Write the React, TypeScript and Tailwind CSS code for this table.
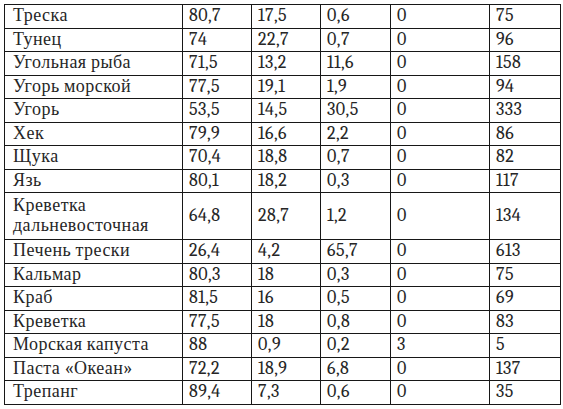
import React from "react";

const rows: [string, string, string, string, string, string][] = [
  ["Треска", "80,7", "17,5", "0,6", "0", "75"],
  ["Тунец", "74", "22,7", "0,7", "0", "96"],
  ["Угольная рыба", "71,5", "13,2", "11,6", "0", "158"],
  ["Угорь морской", "77,5", "19,1", "1,9", "0", "94"],
  ["Угорь", "53,5", "14,5", "30,5", "0", "333"],
  ["Хек", "79,9", "16,6", "2,2", "0", "86"],
  ["Щука", "70,4", "18,8", "0,7", "0", "82"],
  ["Язь", "80,1", "18,2", "0,3", "0", "117"],
  ["Креветка дальневосточная", "64,8", "28,7", "1,2", "0", "134"],
  ["Печень трески", "26,4", "4,2", "65,7", "0", "613"],
  ["Кальмар", "80,3", "18", "0,3", "0", "75"],
  ["Краб", "81,5", "16", "0,5", "0", "69"],
  ["Креветка", "77,5", "18", "0,8", "0", "83"],
  ["Морская капуста", "88", "0,9", "0,2", "3", "5"],
  ["Паста «Океан»", "72,2", "18,9", "6,8", "0", "137"],
  ["Трепанг", "89,4", "7,3", "0,6", "0", "35"],
];

export default function App() {
  return (
    <div className="w-[563px] h-[409px] bg-white pt-[4px] pl-[4px] font-serif text-lg leading-5 tracking-wide text-neutral-800">
      <table className="border-collapse font-serif text-lg leading-5 tracking-wide">
        <colgroup>
          <col className="w-[178px]" />
          <col className="w-[69px]" />
          <col className="w-[69px]" />
          <col className="w-[70px]" />
          <col className="w-[99px]" />
          <col className="w-[71px]" />
        </colgroup>
        <tbody>
          {rows.map((r, i) => {
            const dbl = r[0] === "Креветка дальневосточная";
            return (
              <tr key={i} className={dbl ? "h-[47px]" : "h-[23.5px]"}>
                {r.map((c, j) => (
                  <td
                    key={j}
                    className={
                      j === 0
                        ? "border-[1.5px] border-neutral-900 align-middle p-0 pl-2 font-serif text-lg leading-5 tracking-wide text-neutral-800"
                        : "border-[1.5px] border-neutral-900 align-middle p-0 pl-1.5 font-serif text-lg leading-5 tracking-wide text-neutral-800"
                    }
                  >
                    {dbl && j === 0 ? (
                      <>
                        Креветка
                        <br />
                        дальневосточная
                      </>
                    ) : (
                      c
                    )}
                  </td>
                ))}
              </tr>
            );
          })}
        </tbody>
      </table>
    </div>
  );
}
